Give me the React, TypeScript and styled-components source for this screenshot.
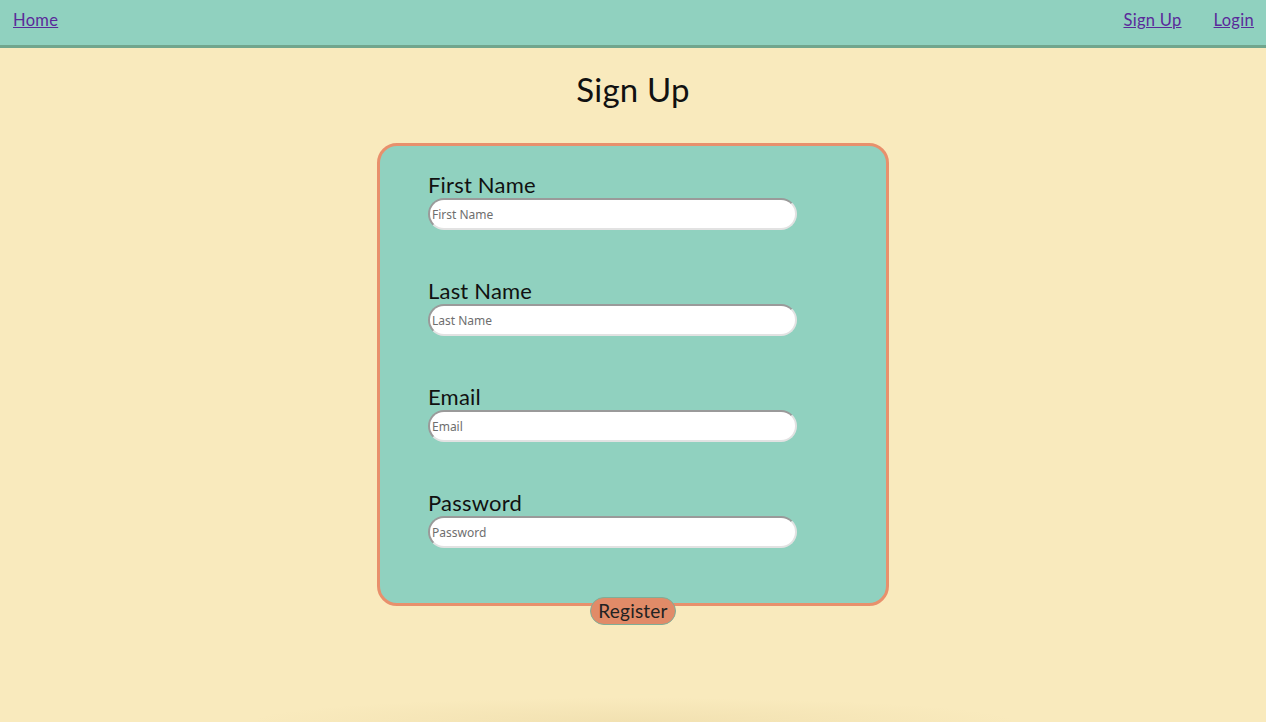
import React from "react";
import styled, { createGlobalStyle } from "styled-components";

const Global = createGlobalStyle`
  html, body { margin: 0; padding: 0; }
  body {
    background: #f9eabd;
    font-family: Lato, "Noto Sans", sans-serif;
    color: #111;
    overflow: hidden;
  }
`;

const Page = styled.div`
  min-height: 722px;
  display: flex;
  flex-direction: column;
`;

const NavBar = styled.nav`
  background: #90d1bf;
  border-bottom: 3px solid #71a68d;
  display: flex;
  align-items: center;
  justify-content: space-between;
  padding: 0 12px 6px 13px;
  box-sizing: content-box;
  height: 39px;
`;

const NavGroup = styled.div`
  display: flex;
  gap: 32px;
`;

const NavLink = styled.a`
  font-size: 16.5px;
  color: #5a2a9a;
  text-decoration: underline;
  letter-spacing: 0.3px;
`;

const Main = styled.main`
  display: flex;
  flex-direction: column;
  align-items: center;
`;

const Title = styled.h1`
  margin: 20px 0 0;
  font-size: 33px;
  font-weight: 400;
  line-height: 42px;
  letter-spacing: 0.2px;
`;

const Card = styled.form`
  margin-top: 33px;
  box-sizing: border-box;
  width: 512px;
  height: 463px;
  border: 3px solid #e8906c;
  border-radius: 20px;
  background: #90d1bf;
  display: flex;
  flex-direction: column;
  gap: 48px;
  padding: 26px 0 0 48px;
`;

const Field = styled.div`
  display: flex;
  flex-direction: column;
`;

const Label = styled.label`
  font-size: 22px;
  line-height: 26px;
  letter-spacing: 0.2px;
`;

const Input = styled.input`
  width: 369px;
  height: 32px;
  box-sizing: border-box;
  border-radius: 16px;
  border-style: solid;
  border-width: 2px;
  border-color: #9a9a9a #e2e2e2 #e2e2e2 #9a9a9a;
  background: #fff;
  padding: 1px 2px 0;
  font-family: "Noto Sans", "DejaVu Sans", sans-serif;
  font-size: 12px;
  outline: none;
  &::placeholder { color: #6e6e6e; }
`;

const RegisterButton = styled.button`
  margin-top: -9px;
  height: 28px;
  padding: 0 7px;
  border-radius: 14px;
  border: 1px solid #7fae98;
  background: #e18b68;
  font-family: Lato, "Noto Sans", sans-serif;
  font-size: 19px;
  color: #222;
  line-height: 26px;
  letter-spacing: 0.2px;
  position: relative;
`;

const Shadow = styled.div`
  margin: auto auto 0;
  width: 760px;
  height: 24px;
  border-radius: 50% 50% 0 0;
  background: radial-gradient(ellipse at 50% 100%, rgba(190,160,90,0.12), rgba(190,160,90,0) 72%);
`;

const fields = ["First Name", "Last Name", "Email", "Password"];

export default function App() {
  return (
    <Page>
      <Global />
      <NavBar>
        <NavLink href="#">Home</NavLink>
        <NavGroup>
          <NavLink href="#">Sign Up</NavLink>
          <NavLink href="#">Login</NavLink>
        </NavGroup>
      </NavBar>
      <Main>
        <Title>Sign Up</Title>
        <Card onSubmit={(e) => e.preventDefault()}>
          {fields.map((f) => (
            <Field key={f}>
              <Label>{f}</Label>
              <Input placeholder={f} type={f === "Password" ? "password" : "text"} />
            </Field>
          ))}
        </Card>
        <RegisterButton type="button">Register</RegisterButton>
      </Main>
      <Shadow />
    </Page>
  );
}
